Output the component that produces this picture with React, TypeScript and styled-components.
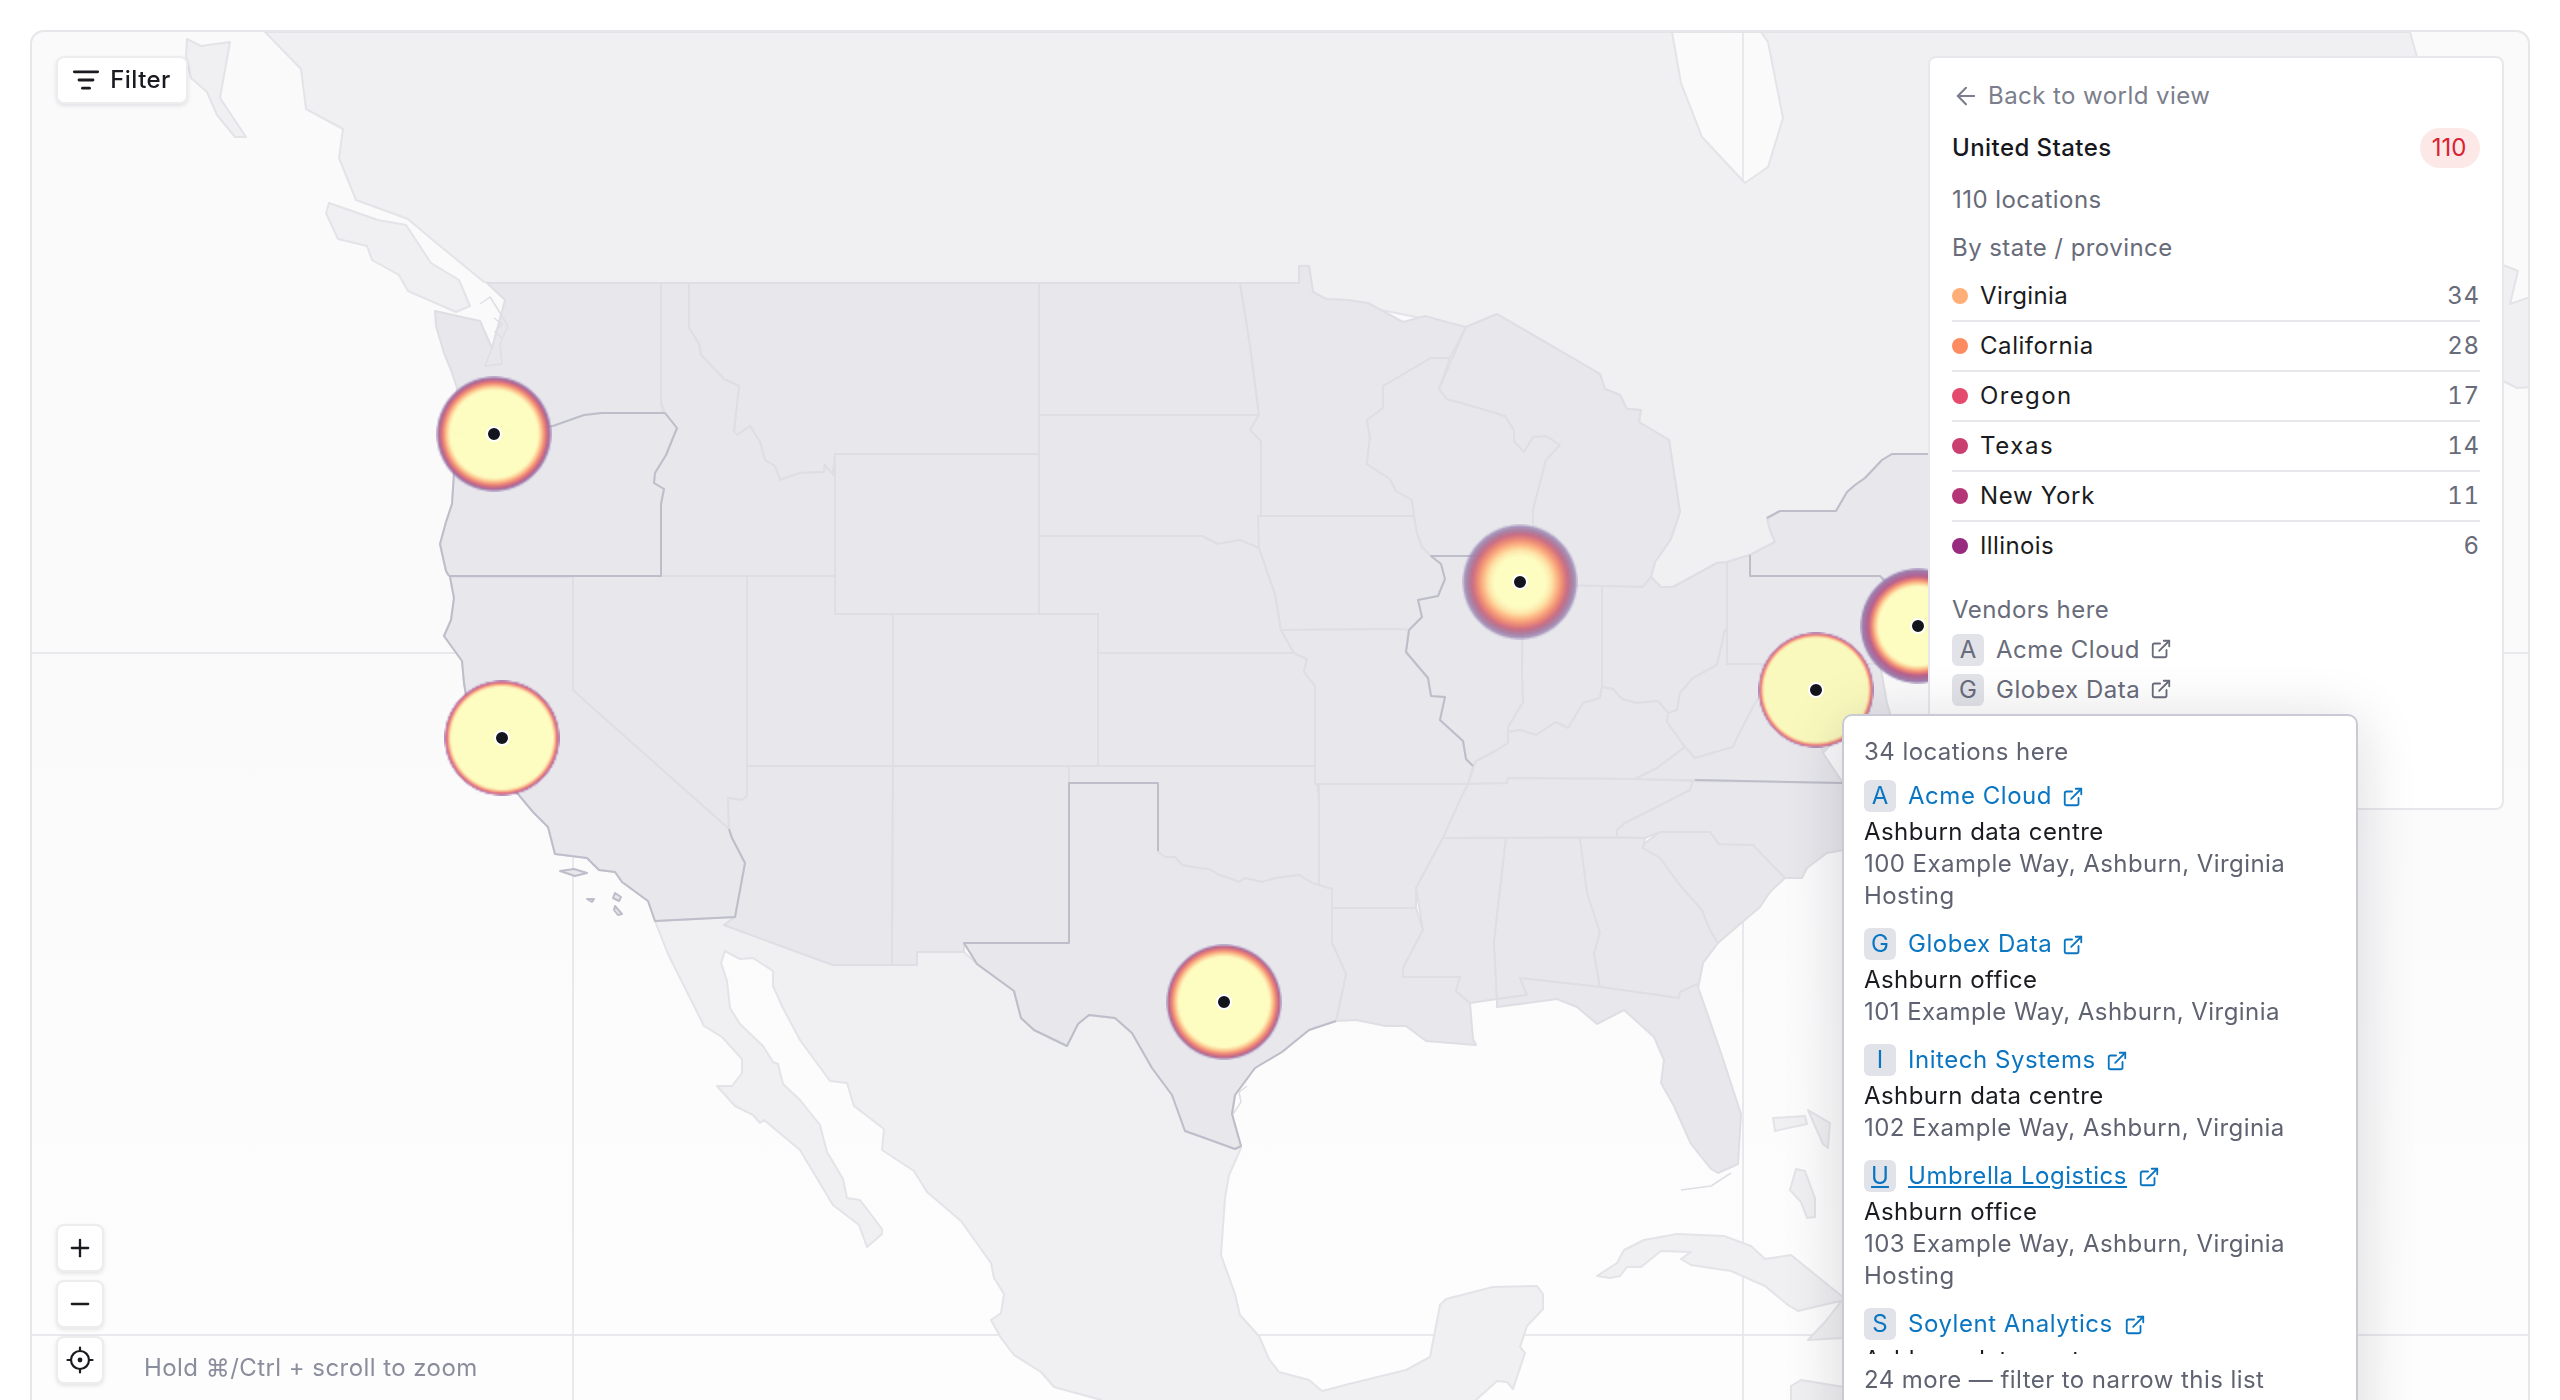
import React, { useEffect, useRef } from "react";
import styled, { createGlobalStyle } from "styled-components";
import { ArrowLeft, ExternalLink, ListFilter, Minus, Plus } from "lucide-react";

const GlobalStyle = createGlobalStyle`
  html { margin: 0; padding: 0; background: #fff; overflow: hidden; height: 100%; }
  body { margin: 0; padding: 0; background: #fff; height: 100%; font-family: Inter, "Liberation Sans", sans-serif; }
  * { box-sizing: border-box; }
`;

const Page = styled.div`
  width: 1280px;
  height: 700px;
  padding: 15px 15px 0;
  overflow: hidden;
  transform: scale(2);
  transform-origin: 0 0;
`;

const MapCard = styled.div`
  position: relative;
  height: 750px;
  border: 1px solid #e6e6eb;
  border-radius: 7px;
  overflow: hidden;
  background: linear-gradient(180deg, #fafafb 0%, #fafafb 40%, #fdfdfd 90%);
`;

const MapSvg = styled.svg`
  position: absolute;
  inset: 0;
  width: 1280px;
  height: 750px;
`;

const FloatButton = styled.button`
  position: absolute;
  display: flex;
  align-items: center;
  justify-content: center;
  background: #fff;
  border: 1px solid #ededf0;
  border-radius: 4px;
  box-shadow: 0 1px 2px rgba(20, 20, 40, 0.1);
  color: #1a1b20;
  padding: 0;
  font: inherit;
`;

const FilterButton = styled(FloatButton)`
  left: 12px;
  top: 12px;
  width: 65.5px;
  height: 23.5px;
  gap: 5px;
  font-size: 12px;
  font-weight: 500;
  letter-spacing: 0.22px;
`;

const ZoomStack = styled.div`
  position: absolute;
  left: 12px;
  top: 596px;
  display: flex;
  flex-direction: column;
  gap: 4.5px;
`;

const ZoomButton = styled(FloatButton)`
  position: static;
  width: 23.5px;
  height: 23.5px;
`;

const Hint = styled.div`
  position: absolute;
  left: 56px;
  top: 660px;
  font-size: 12px;
  line-height: 16px;
  letter-spacing: 0.22px;
  color: #8a8d9b;
`;

const MarkerBox = styled.div<{ $x: number; $y: number }>`
  position: absolute;
  left: ${(p) => (p.$x - 32) / 2 - 29}px;
  top: ${(p) => (p.$y - 32) / 2 - 29}px;
  width: 58px;
  height: 58px;
  display: flex;
  align-items: center;
  justify-content: center;
`;

const MarkerCanvas = styled.canvas`
  position: absolute;
  inset: 0;
  width: 58px;
  height: 58px;
`;

const MarkerDot = styled.span`
  position: relative;
  width: 8px;
  height: 8px;
  border-radius: 50%;
  background: #14151c;
  border: 1px solid #fff;
`;

const Panel = styled.aside`
  position: absolute;
  top: 12px;
  right: 12.5px;
  width: 287.5px;
  height: 376.5px;
  padding: 10.7px 11px 0;
  background: #fff;
  border: 1px solid #e8e8ec;
  border-radius: 4px;
  overflow: hidden;
  font-size: 12px;
  line-height: 16px;
  letter-spacing: 0.22px;
`;

const BackLink = styled.div`
  display: flex;
  align-items: center;
  gap: 4px;
  color: #7b7e8c;
`;

const CountryRow = styled.div`
  display: flex;
  align-items: center;
  justify-content: space-between;
  margin-top: 8px;
  height: 20px;
  font-weight: 500;
  color: #17181d;
`;

const CountBadge = styled.span`
  display: flex;
  align-items: center;
  justify-content: center;
  width: 30px;
  height: 20px;
  border-radius: 10px;
  background: #fde8e8;
  color: #d92231;
  font-weight: 400;
  letter-spacing: 0;
`;

const Muted = styled.div<{ $top: number }>`
  color: #686b79;
  margin-top: ${(p) => p.$top}px;
`;

const StateList = styled.div`
  margin-top: 4.8px;
`;

const StateRow = styled.div`
  display: flex;
  align-items: center;
  height: 25px;
  padding-bottom: 1px;
  border-bottom: 1px solid #e8e8ec;
  color: #1a1b20;
  &:last-child {
    border-bottom: 0;
    padding-bottom: 2px;
  }
`;

const StateName = styled.span<{ $ls: number }>`
  letter-spacing: ${(p) => p.$ls}px;
`;

const StateDot = styled.span<{ $c: string }>`
  width: 8px;
  height: 8px;
  border-radius: 50%;
  background: ${(p) => p.$c};
  margin-right: 6px;
`;

const StateCount = styled.span`
  margin-left: auto;
  margin-right: -0.3px;
  color: #686b79;
  font-variant-numeric: tabular-nums;
  letter-spacing: 0.3px;
`;

const VendorBadge = styled.span`
  flex: none;
  display: flex;
  align-items: center;
  justify-content: center;
  width: 16px;
  height: 16px;
  border-radius: 3px;
  background: #e2e3e9;
  letter-spacing: 0;
`;

const VendorList = styled.div`
  margin-top: 4px;
  display: flex;
  flex-direction: column;
  gap: 4px;
  color: #686b79;
  letter-spacing: 0.27px;
`;

const VendorRow = styled.div`
  display: flex;
  align-items: center;
  gap: 6px;
  height: 16px;
`;

const VendorIcon = styled(ExternalLink)`
  margin-left: -0.8px;
  flex: none;
`;

const Popup = styled.div`
  position: absolute;
  left: 905px;
  top: 341px;
  width: 257.5px;
  height: 380px;
  padding: 10px;
  background: #fff;
  border: 1px solid #c9cad3;
  border-radius: 5px;
  box-shadow: 0 4px 30px rgba(20, 20, 40, 0.16);
  font-size: 12px;
  line-height: 16px;
  letter-spacing: 0.22px;
  color: #5f6270;
`;

const PopupList = styled.div`
  margin-top: 6px;
  height: 287px;
  overflow: hidden;
  display: flex;
  flex-direction: column;
  gap: 8px;
`;

const PopupItem = styled.div`
  flex: none;
`;

const PopupLink = styled.div<{ $hover?: boolean }>`
  display: flex;
  align-items: center;
  gap: 6px;
  height: 16px;
  margin-bottom: 2px;
  color: #0a76c2;
  letter-spacing: 0.27px;
  text-decoration: ${(p) => (p.$hover ? "underline" : "none")};
`;

const PlaceName = styled.div`
  color: #1a1b20;
`;

const PopupFooter = styled.div`
  margin-top: 5px;
`;

const RED_RIVER = "1158,852 1165,857 1175,857 1182,865 1198,868 1209,869 1219,875 1229,878 1239,882 1245,878 1262,882 1276,878 1299,875 1312,883 1332,889";
const RED_RIVER_REV = RED_RIVER.split(" ").reverse().join(" ");

const STATE_SHAPES: string[] = [
  "487,283 661,283 661,402 663,413 602,413 584,415 553,426 520,430 454,433 457,388 451,370 444,353 436,326 435,311 480,321 492,348 505,300",
  "689,283 1039,283 1039,454 835,454 833,475 825,465 824,472 800,473 780,480 775,466 765,460 760,442 750,426 737,435 734,431 739,386 724,379 701,355 699,344 689,328",
  "661,283 689,283 689,328 699,344 701,355 724,379 739,386 734,431 737,435 750,426 760,442 765,460 775,466 780,480 800,473 824,472 825,465 833,475 835,454 835,576 661,576 661,504 664,489 654,483 655,473 666,455 677,428 665,413 661,402",
  "1039,283 1240,283 1250,345 1259,415 1039,415",
  "1039,415 1259,415 1250,430 1261,441 1261,516 1259,548 1240,540 1218,544 1202,536 1039,536",
  "835,454 1039,454 1039,614 835,614",
  "1039,536 1202,536 1218,544 1240,540 1259,548 1275,594 1281,630 1294,653 1098,653 1098,614 1039,614",
  "893,614 1098,614 1098,766 893,766",
  "1098,653 1294,653 1307,659 1304,672 1315,686 1315,766 1098,766",
  "747,576 835,576 835,614 893,614 893,766 747,766",
  "573,576 747,576 747,796 742,800 728,798 729,829 582,700 573,690",
  "747,766 893,766 892,965 833,965 800,953 724,925 735,917 745,863 732,838 729,829 728,798 742,800 747,796",
  "893,766 1069,766 1069,943 964,943 964,952 917,952 917,965 892,965",
  `1069,766 1315,766 1319,800 1319,886 ${RED_RIVER_REV} 1158,783 1069,783`,
  "1240,283 1299,283 1299,266 1309,266 1313,292 1326,299 1348,300 1368,303 1390,315 1403,322 1425,316 1450,323 1466,327 1450,358 1431,358 1390,382 1383,386 1383,408 1367,420 1370,437 1367,464 1390,479 1396,491 1412,500 1414,516 1261,516 1261,441 1250,430 1259,415 1250,345",
  "1258,516 1414,516 1417,533 1422,547 1441,564 1445,579 1438,596 1418,600 1422,617 1409,630 1399,629 1281,630 1275,594 1259,548",
  "1383,386 1390,382 1431,358 1450,358 1439,389 1447,399 1479,408 1505,416 1514,430 1514,441 1524,452 1533,437 1546,436 1560,445 1546,460 1533,510 1533,556 1431,556 1422,547 1417,533 1414,516 1412,500 1396,491 1390,479 1367,464 1370,437 1367,420 1383,408",
  "1466,327 1497,314 1600,374 1605,389 1620,395 1627,409 1641,410 1639,422 1669,440 1680,512 1671,539 1655,562 1651,577 1643,587 1602,586 1523,585 1533,556 1533,510 1546,460 1560,445 1546,436 1533,437 1524,452 1514,441 1514,430 1505,416 1479,408 1447,399 1439,389",
  "1281,630 1399,629 1409,630 1406,652 1428,678 1431,696 1445,697 1440,720 1463,741 1466,759 1473,766 1468,784 1315,784 1315,686 1304,672 1307,659 1294,653",
  "1319,784 1468,784 1460,800 1443,838 1416,888 1416,908 1332,908 1332,889 1319,886",
  "1332,908 1416,908 1423,930 1403,968 1403,977 1460,977 1456,991 1470,1003 1473,1039 1476,1045 1426,1041 1406,1026 1386,1026 1356,1020 1336,1021 1346,974 1332,943",
  "1523,585 1602,586 1602,687 1600,698 1583,703 1568,728 1556,722 1536,735 1520,730 1508,732 1508,727 1523,702 1522,677",
  "1602,586 1643,587 1651,577 1661,587 1673,587 1717,563 1727,562 1727,630 1725,630 1717,665 1693,678 1680,693 1677,710 1668,713 1658,701 1637,703 1622,699 1613,689 1602,687",
  "1476,761 1495,751 1508,732 1520,730 1536,735 1556,722 1568,728 1583,703 1600,698 1602,687 1613,689 1622,699 1637,703 1658,701 1668,713 1667,722 1685,747 1657,768 1635,779 1508,778 1507,783 1468,784",
  "1468,784 1507,783 1508,778 1635,779 1693,781 1690,790 1657,807 1625,823 1617,830 1617,837 1443,838 1460,800",
  "1443,838 1506,838 1494,942 1497,999 1470,1003 1456,991 1460,977 1403,977 1403,968 1423,930 1416,888",
  "1506,838 1580,838 1600,934 1594,953 1600,987 1520,978 1527,995 1497,999 1494,942",
  "1580,838 1645,838 1643,848 1660,858 1680,885 1702,910 1710,930 1718,943 1703,963 1698,988 1680,992 1679,998 1600,987 1594,953 1600,933 1587,893",
  "1600,987 1679,998 1680,992 1697,984 1721,1053 1741,1114 1738,1164 1718,1173 1711,1169 1691,1144 1674,1106 1661,1083 1664,1060 1654,1037 1624,1010 1597,1024 1577,1007 1557,999 1497,1007 1497,999 1527,995 1520,978",
  "1645,843 1660,832 1710,832 1719,844 1753,845 1785,878 1770,892 1760,907 1718,943 1710,930 1702,910 1680,885 1660,858 1643,848",
  "1617,837 1617,830 1625,823 1657,807 1690,790 1693,781 1843,783 1843,850 1827,853 1807,868 1802,878 1785,878 1753,845 1719,844 1710,832 1660,832 1645,838",
  "1727,630 1727,664 1760,664 1775,672 1753,707 1737,738 1733,747 1695,758 1685,747 1667,722 1668,713 1677,710 1680,693 1693,678 1717,665 1725,630",
  "1727,664 1880,664 1887,703 1892,720 1850,722 1823,753 1800,690 1775,672 1760,664",
  "1727,562 1750,555 1750,576 1880,576 1893,590 1880,640 1880,664 1727,664",
  "449,576 661,576 661,504 664,489 654,483 655,473 666,455 677,428 665,413 602,413 584,415 553,426 520,430 454,433 454,473 452,504 446,522 440,544 446,571",
  "450,577 573,577 573,690 584,700 729,829 732,838 745,863 735,917 655,921 648,901 622,882 615,872 599,870 587,858 555,854 548,827 533,812 518,794 490,760 470,720 464,683 462,661 444,636 451,620 454,598",
  `1069,783 1158,783 ${RED_RIVER} 1332,943 1346,974 1336,1021 1309,1030 1282,1052 1255,1068 1235,1095 1232,1114 1241,1146 1235,1149 1202,1137 1185,1131 1172,1095 1152,1068 1132,1033 1115,1018 1089,1015 1078,1024 1067,1046 1034,1030 1021,1018 1014,991 977,964 964,943 1069,943`,
  "1431,556 1525,556 1522,640 1522,678 1523,702 1508,727 1508,743 1495,751 1476,761 1473,766 1466,759 1463,741 1440,720 1445,697 1431,696 1428,678 1406,652 1409,630 1422,617 1418,600 1438,596 1445,579 1441,564",
  "1635,779 1657,768 1685,747 1695,758 1733,747 1737,738 1753,707 1775,672 1800,690 1820,740 1823,753 1843,783",
  "1750,555 1775,542 1770,530 1767,518 1780,511 1836,511 1847,492 1855,485 1865,478 1882,460 1892,454 1950,454 1950,620 1880,576 1750,576",
];

const DARK_EDGES: string[] = [
  "449,576 661,576 661,504 664,489 654,483 655,473 666,455 677,428 665,413 602,413 584,415 553,426 520,430 454,433 454,473 452,504 446,522 440,544 446,571 449,576",
  "450,577 454,598 451,620 444,636 462,661 464,683 470,720 490,760 518,794 533,812 548,827 555,854 587,858 599,870 615,872 622,882 648,901 655,921 735,917 745,863 732,838 729,829",
  "1158,851 1158,783 1069,783 1069,943 964,943 977,964 1014,991 1021,1018 1034,1030 1067,1046 1078,1024 1089,1015 1115,1018 1132,1033 1152,1068 1172,1095 1185,1131 1202,1137 1235,1149 1241,1146 1232,1114 1235,1095 1255,1068 1282,1052 1309,1030 1336,1021",
  "1520,556 1431,556 1441,564 1445,579 1438,596 1418,600 1422,617 1409,630 1406,652 1428,678 1431,696 1445,697 1440,720 1463,741 1466,759 1473,766",
  "1695,780 1843,783",
  "1767,518 1780,511 1836,511 1847,492 1855,485 1865,478 1882,460 1892,454 1950,454",
  "1750,555 1750,576 1880,576 1893,590",
];

const CANADA =
  "M 265,32 L 301,69 306,109 343,129 339,158 356,200 408,219 434,241 484,282 490,283 1299,283 1299,266 1309,266 1313,292 1326,299 1466,327 1497,314 1600,374 1605,389 1620,395 1627,409 1641,410 1639,422 1669,440 1680,512 1671,539 1655,562 1651,577 1661,587 1673,587 1717,563 1727,562 1750,555 1775,542 1770,530 1767,518 1780,511 1836,511 1847,492 1855,485 1865,478 1882,460 1892,454 1960,454 2417,454 2417,57 2410,32 Z M 1672,32 L 1681,83 1702,137 1745,183 1768,167 1783,118 1768,42 1761,32 Z";

const CANADA_ISLANDS: string[] = [
  "329,203 378,220 406,225 431,263 459,280 470,306 456,312 408,291 399,275 372,260 367,246 338,239 326,213",
  "187,39 201,46 230,42 220,98 246,137 235,137 217,115 207,92 191,78 186,56",
  "2503,265 2518,271 2510,304 2530,297 2530,387 2517,388 2503,381",
];

const MEXICO =
  "655,921 735,917 724,925 800,953 833,965 892,965 917,965 917,952 964,952 977,964 1014,991 1021,1018 1034,1030 1067,1046 1078,1024 1089,1015 1115,1018 1132,1033 1152,1068 1172,1095 1185,1131 1202,1137 1241,1148 1229,1175 1225,1198 1221,1255 1235,1294 1240,1315 1259,1336 1269,1359 1279,1372 1309,1380 1322,1391 1349,1384 1406,1370 1430,1357 1440,1305 1446,1299 1493,1287 1537,1286 1543,1294 1543,1309 1527,1326 1520,1347 1525,1353 1513,1389 1507,1382 1497,1381 1476,1400 1476,1510 1110,1510 1101,1400 1054,1387 1041,1372 1014,1355 1001,1338 991,1320 1001,1313 1004,1294 994,1278 991,1263 961,1221 927,1192 914,1171 882,1150 884,1129 854,1106 847,1083 830,1081 800,1040 783,1008 773,986 773,971 753,958 740,959 725,951 721,963 727,981 730,1008 740,1024 763,1046 773,1062 778,1064 783,1084 800,1100 820,1125 827,1152 843,1179 847,1198 860,1200 882,1229 882,1234 867,1247 859,1225 833,1205 800,1150 764,1120 760,1123 753,1115 735,1106 717,1086 732,1086 742,1073 742,1059 722,1037 704,1026 668,954";

const CARIBBEAN: string[] = [
  "1597,1276 1617,1263 1624,1250 1644,1240 1677,1234 1724,1236 1751,1246 1765,1259 1791,1255 1844,1298 1825,1322 1808,1340 1844,1338 1844,1300 1798,1311 1788,1305 1765,1286 1731,1271 1691,1265 1681,1259 1691,1252 1661,1251 1641,1267 1627,1267 1620,1276 1610,1278",
  "1791,1386 1801,1380 1844,1387 1844,1420 1791,1420",
  "1773,1118 1805,1116 1807,1124 1775,1131",
  "1808,1110 1830,1123 1828,1148 1823,1144",
  "1796,1169 1805,1171 1815,1198 1815,1217 1807,1218 1801,1202 1790,1190",
];

const MapDrawing = () => (
  <MapSvg viewBox="32 32 2560 1500">
    <g stroke="#e8e8ed" strokeWidth="2">
      <line x1="32" y1="653" x2="2600" y2="653" />
      <line x1="32" y1="1335" x2="2600" y2="1335" />
      <line x1="573" y1="32" x2="573" y2="1540" />
      <line x1="1743" y1="32" x2="1743" y2="1540" />
    </g>
    <g fill="#f0f0f2" stroke="#e3e3e8" strokeWidth="2" strokeLinejoin="round">
      <path d={CANADA} fillRule="evenodd" />
      {CANADA_ISLANDS.map((p) => (
        <polygon key={p} points={p} />
      ))}
      <polygon points={MEXICO} />
      {CARIBBEAN.map((p) => (
        <polygon key={p} points={p} />
      ))}
    </g>
    <g fill="#e7e7ec" stroke="#dedee4" strokeWidth="2" strokeLinejoin="round">
      {STATE_SHAPES.map((p) => (
        <polygon key={p} points={p} />
      ))}
      <path
        fill="none"
        strokeWidth="1.5"
        d="M480,304 L490,297 497,308 508,326 500,344 502,364 485,366 492,348 M494,318 l8,6 -7,8 7,6 M1731,1173 l-20,13 -30,4 M1233,1114 l8,-12 -2,-10 8,-6"
      />
    </g>
    <g fill="none" stroke="#bdbec9" strokeWidth="2" strokeLinejoin="round">
      {DARK_EDGES.map((p) => (
        <polyline key={p} points={p} />
      ))}
      <polygon fill="#e7e7ec" points="587,899 594,899 592,902" />
      <polygon fill="#e7e7ec" points="615,893 621,897 619,901 613,898" />
      <polygon fill="#e7e7ec" points="615,906 622,914 618,915 614,910" />
      <polygon fill="#e7e7ec" points="560,871 574,869 587,873 575,876" />
    </g>
  </MapSvg>
);

const LocateIcon = () => (
  <svg width="14" height="14" viewBox="0 0 28 28" fill="none" stroke="#1a1b20" strokeWidth="2.2" strokeLinecap="round">
    <circle cx="14" cy="14" r="9" />
    <circle cx="14" cy="14" r="2.4" fill="#1a1b20" stroke="none" />
    <path d="M14 1.5V5M14 23v3.5M1.5 14H5M23 14h3.5" />
  </svg>
);

type Stop = [number, number, number, number, number];
const Y: [number, number, number] = [253, 252, 192];

const wide = (y: number): Stop[] => [
  [0, ...Y, 1],
  [y, ...Y, 1],
  [y + 0.06, 253, 197, 140, 1],
  [y + 0.12, 238, 128, 112, 1],
  [y + 0.18, 180, 92, 140, 1],
  [0.97, 148, 122, 172, 0.95],
  [1.0, 148, 122, 178, 0],
];

const HEATS: { x: number; y: number; stops: Stop[] }[] = [
  { x: 494, y: 433, stops: wide(0.76) },
  {
    x: 502,
    y: 737,
    stops: [
      [0, ...Y, 1],
      [0.88, ...Y, 1],
      [0.92, 251, 181, 132, 1],
      [0.95, 229, 104, 120, 1],
      [0.98, 168, 100, 160, 0.9],
      [1.0, 150, 120, 180, 0],
    ],
  },
  {
    x: 1519,
    y: 581,
    stops: [
      [0, ...Y, 1],
      [0.45, ...Y, 1],
      [0.55, 253, 227, 165, 1],
      [0.64, 253, 181, 131, 1],
      [0.73, 238, 138, 114, 1],
      [0.82, 201, 106, 130, 1],
      [0.89, 166, 118, 154, 0.95],
      [0.96, 155, 135, 180, 0.85],
      [1.0, 155, 135, 180, 0],
    ],
  },
  { x: 1224, y: 1002, stops: wide(0.78) },
  { x: 1918, y: 626, stops: wide(0.68) },
  {
    x: 1816,
    y: 690,
    stops: [
      [0, 250, 249, 188, 1],
      [0.9, 250, 249, 188, 1],
      [0.93, 251, 181, 132, 1],
      [0.96, 229, 104, 120, 1],
      [0.98, 168, 100, 160, 0.9],
      [1.0, 150, 120, 180, 0],
    ],
  },
];

const HeatMarker = ({ x, y, stops }: { x: number; y: number; stops: Stop[] }) => {
  const ref = useRef<HTMLCanvasElement>(null);
  useEffect(() => {
    const ctx = ref.current?.getContext("2d");
    if (!ctx) return;
    const img = ctx.createImageData(58, 58);
    for (let j = 0; j < 58; j++) {
      for (let i = 0; i < 58; i++) {
        const t = Math.hypot(i + 0.5 - 29, j + 0.5 - 29) / 29;
        if (t >= 1) continue;
        let k = 0;
        while (k < stops.length - 2 && t > stops[k + 1][0]) k++;
        const a = stops[k];
        const b = stops[k + 1];
        const f = Math.min(1, Math.max(0, (t - a[0]) / (b[0] - a[0])));
        const o = (j * 58 + i) * 4;
        for (let c = 0; c < 3; c++) img.data[o + c] = a[c + 1] + (b[c + 1] - a[c + 1]) * f;
        img.data[o + 3] = (a[4] + (b[4] - a[4]) * f) * 250;
      }
    }
    ctx.putImageData(img, 0, 0);
  }, [stops]);
  return (
    <MarkerBox $x={x} $y={y}>
      <MarkerCanvas ref={ref} width={58} height={58} />
      <MarkerDot />
    </MarkerBox>
  );
};

const STATES: [string, number, string, number][] = [
  ["Virginia", 34, "#feae77", 0.2],
  ["California", 28, "#fc8b62", 0.28],
  ["Oregon", 17, "#e44a6b", 0.68],
  ["Texas", 14, "#c93f70", 0.8],
  ["New York", 11, "#b43678", 0.35],
  ["Illinois", 6, "#962b80", 0.2],
];

const ITEMS = [
  { l: "A", n: "Acme Cloud", p: "Ashburn data centre", a: "100 Example Way, Ashburn, Virginia", h: true },
  { l: "G", n: "Globex Data", p: "Ashburn office", a: "101 Example Way, Ashburn, Virginia", h: false },
  { l: "I", n: "Initech Systems", p: "Ashburn data centre", a: "102 Example Way, Ashburn, Virginia", h: false },
  { l: "U", n: "Umbrella Logistics", p: "Ashburn office", a: "103 Example Way, Ashburn, Virginia", h: true, hover: true },
  { l: "S", n: "Soylent Analytics", p: "Ashburn data centre", a: "104 Example Way, Ashburn, Virginia", h: false },
];

export default function App() {
  return (
    <Page>
      <GlobalStyle />
      <MapCard>
        <MapDrawing />
        {HEATS.map((m) => (
          <HeatMarker key={m.x} x={m.x} y={m.y} stops={m.stops} />
        ))}
        <FilterButton>
          <ListFilter size={14} strokeWidth={2.4} />
          Filter
        </FilterButton>
        <ZoomStack>
          <ZoomButton><Plus size={14} strokeWidth={2} /></ZoomButton>
          <ZoomButton><Minus size={14} strokeWidth={2} /></ZoomButton>
          <ZoomButton><LocateIcon /></ZoomButton>
        </ZoomStack>
        <Hint>Hold ⌘/Ctrl + scroll to zoom</Hint>
        <Panel>
          <BackLink>
            <ArrowLeft size={14} strokeWidth={1.8} />
            Back to world view
          </BackLink>
          <CountryRow>
            United States
            <CountBadge>110</CountBadge>
          </CountryRow>
          <Muted $top={8}>110 locations</Muted>
          <Muted $top={8}>By state / province</Muted>
          <StateList>
            {STATES.map(([n, c, col, ls]) => (
              <StateRow key={n}>
                <StateDot $c={col} />
                <StateName $ls={ls}>{n}</StateName>
                <StateCount>{c}</StateCount>
              </StateRow>
            ))}
          </StateList>
          <Muted $top={10.5}>Vendors here</Muted>
          <VendorList>
            <VendorRow>
              <VendorBadge>A</VendorBadge>
              Acme Cloud
              <VendorIcon size={11} strokeWidth={2} />
            </VendorRow>
            <VendorRow>
              <VendorBadge>G</VendorBadge>
              Globex Data
              <VendorIcon size={11} strokeWidth={2} />
            </VendorRow>
            <VendorRow>
              <VendorBadge>I</VendorBadge>
              Initech Systems
              <VendorIcon size={11} strokeWidth={2} />
            </VendorRow>
          </VendorList>
        </Panel>
        <Popup>
          <div>34 locations here</div>
          <PopupList>
            {ITEMS.map((it) => (
              <PopupItem key={it.l}>
                <PopupLink $hover={it.hover}>
                  <VendorBadge>{it.l}</VendorBadge>
                  {it.n}
                  <VendorIcon size={11} strokeWidth={2} />
                </PopupLink>
                <PlaceName>{it.p}</PlaceName>
                <div>{it.a}</div>
                {it.h && <div>Hosting</div>}
              </PopupItem>
            ))}
          </PopupList>
          <PopupFooter>24 more — filter to narrow this list</PopupFooter>
        </Popup>
      </MapCard>
    </Page>
  );
}
